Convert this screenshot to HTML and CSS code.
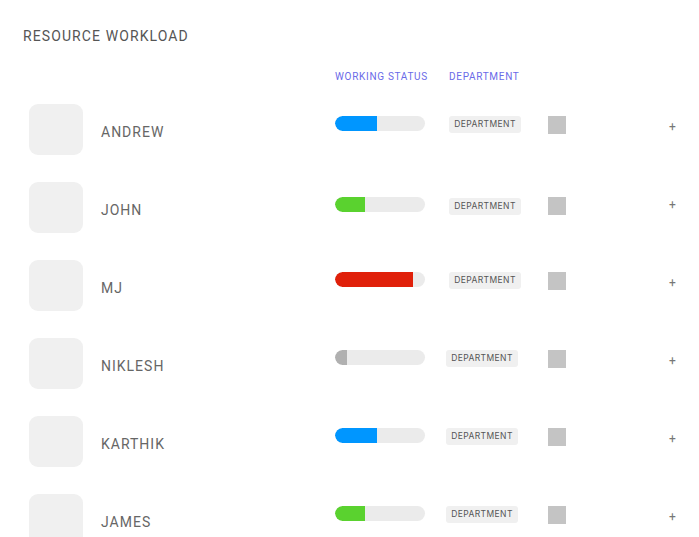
FILE: index.html
```html
<!DOCTYPE html>
<html>
<head>
<meta charset="utf-8">
<link rel="stylesheet" href="styles.css">
</head>
<body>
<div class="page">
  <h1 class="title">RESOURCE WORKLOAD</h1>
  <div class="head">
    <span class="h-status">WORKING STATUS</span>
    <span class="h-dept">DEPARTMENT</span>
  </div>
  <div class="list">
    <div class="row">
      <div class="avatar"></div>
      <div class="name">ANDREW</div>
      <div class="bar"><div class="fill blue" style="width:42px"></div></div>
      <div class="badge">DEPARTMENT</div>
      <div class="sq"></div>
      <div class="plus">+</div>
    </div>
    <div class="row low">
      <div class="avatar"></div>
      <div class="name">JOHN</div>
      <div class="bar"><div class="fill green" style="width:30px"></div></div>
      <div class="badge">DEPARTMENT</div>
      <div class="sq"></div>
      <div class="plus">+</div>
    </div>
    <div class="row">
      <div class="avatar"></div>
      <div class="name">MJ</div>
      <div class="bar"><div class="fill red" style="width:78px"></div></div>
      <div class="badge">DEPARTMENT</div>
      <div class="sq"></div>
      <div class="plus">+</div>
    </div>
    <div class="row shift">
      <div class="avatar"></div>
      <div class="name">NIKLESH</div>
      <div class="bar"><div class="fill gray" style="width:12px"></div></div>
      <div class="badge">DEPARTMENT</div>
      <div class="sq"></div>
      <div class="plus">+</div>
    </div>
    <div class="row shift">
      <div class="avatar"></div>
      <div class="name">KARTHIK</div>
      <div class="bar"><div class="fill blue" style="width:42px"></div></div>
      <div class="badge">DEPARTMENT</div>
      <div class="sq"></div>
      <div class="plus">+</div>
    </div>
    <div class="row shift">
      <div class="avatar"></div>
      <div class="name">JAMES</div>
      <div class="bar"><div class="fill green" style="width:30px"></div></div>
      <div class="badge">DEPARTMENT</div>
      <div class="sq"></div>
      <div class="plus">+</div>
    </div>
  </div>
</div>
</body>
</html>
```
FILE: styles.css
```css
html, body {
  margin: 0;
  padding: 0;
  background: #fff;
}
body {
  font-family: Roboto, "Liberation Sans", sans-serif;
  color: #666;
  height: 537px;
  overflow: hidden;
}
.page {
  padding: 27px 0 0 23px;
}
.title {
  margin: 0;
  font-size: 14px;
  font-weight: 400;
  letter-spacing: 1.1px;
  color: #555;
  line-height: 18px;
}
.head {
  display: flex;
  margin-top: 25px;
  height: 14px;
  line-height: 14px;
  font-size: 10px;
  color: #6a6ae8;
  letter-spacing: 0.7px;
}
.h-status {
  margin-left: 312px;
  width: 114px;
}
.list {
  margin-top: 20px;
  display: flex;
  flex-direction: column;
}
.row {
  display: flex;
  height: 78px;
}
.avatar {
  width: 54px;
  height: 51px;
  margin-left: 6px;
  border-radius: 9px;
  background: #f0f0f0;
}
.name {
  margin-top: 20px;
  margin-left: 18px;
  width: 234px;
  height: 16px;
  font-size: 14px;
  line-height: 16px;
  letter-spacing: 1px;
  color: #666;
}
.bar {
  margin-top: 12px;
  width: 90px;
  height: 15px;
  border-radius: 8px;
  background: #ebebeb;
  overflow: hidden;
}
.fill {
  height: 100%;
  border-radius: 8px 0 0 8px;
}
.blue { background: #0096ff; }
.green { background: #5ad22f; }
.red { background: #e0200a; }
.gray { background: #b0b0b0; }
.badge {
  margin-top: 12px;
  margin-left: 24px;
  width: 72px;
  height: 17px;
  line-height: 17px;
  text-align: center;
  border-radius: 3px;
  background: #f0f0f0;
  font-family: Inter, "Liberation Sans", sans-serif;
  font-size: 8.5px;
  color: #555;
  letter-spacing: 0.4px;
}
.row.shift .badge {
  margin-left: 21px;
  margin-right: 3px;
}
.sq {
  margin-top: 12px;
  margin-left: 27px;
  width: 18px;
  height: 18px;
  background: #c4c4c4;
}
.row.low .bar,
.row.low .sq {
  margin-top: 15px;
}
.row.low .badge {
  margin-top: 16px;
}
.plus {
  margin-top: 16px;
  margin-left: 103px;
  height: 14px;
  font-size: 12px;
  line-height: 14px;
  color: #777;
}
```
